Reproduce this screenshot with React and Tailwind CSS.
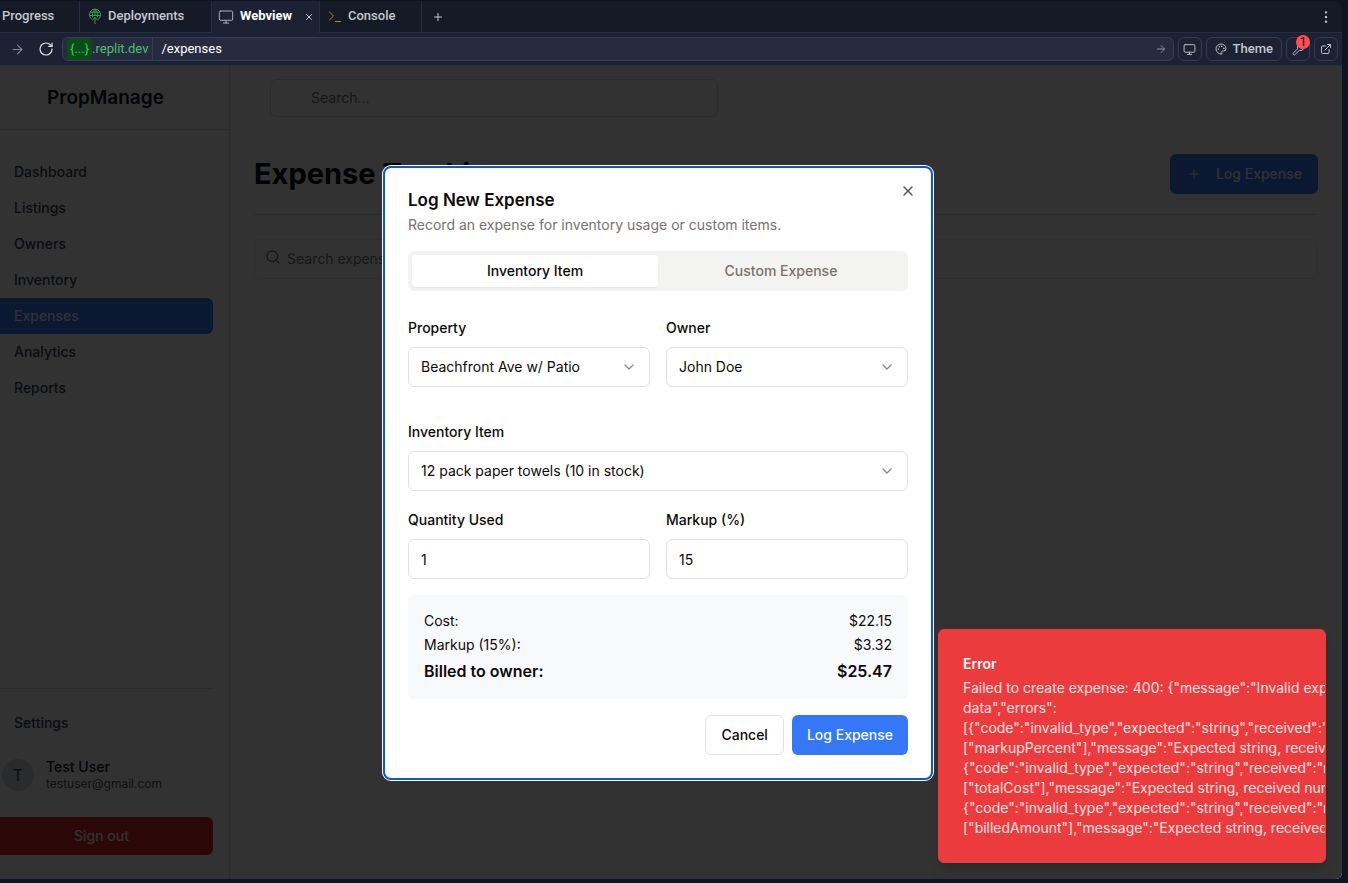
import React from "react";
import {
  ArrowRight,
  ChevronDown,
  EllipsisVertical,
  ExternalLink,
  Monitor,
  Palette,
  Plus,
  RotateCw,
  Search,
  Wrench,
  X,
} from "lucide-react";

function DeployIcon() {
  return (
    <svg width="14" height="16" viewBox="0 0 14 16" fill="none" stroke="#3f9a55" strokeWidth="1" strokeLinecap="round" strokeLinejoin="round" aria-hidden="true">
      <path d="M3.6 11.2A5.6 5.6 0 1 1 10.4 11.2" />
      <path d="M4.7 9.200C4 6.500 4.700 3 7 1.200C9.300 3 10 6.500 9.300 9.200" />
      <path d="M2.200 4.200H11.800M1.500 7.500H12.500M7 1.200V7.500" />
      <path d="M7 15.500V9.500M4.500 12L7 9.500L9.500 12" />
    </svg>
  );
}

function PromptIcon() {
  return (
    <svg width="14" height="14" viewBox="0 0 14 14" fill="none" stroke="#a98a3c" strokeWidth="1" strokeLinecap="round" strokeLinejoin="round" aria-hidden="true">
      <path d="M1.500 3L5.500 7L1.500 11M7.500 12.500H12.500" />
    </svg>
  );
}

function BrowserTabs() {
  return (
    <div className="flex h-8 shrink-0 overflow-hidden rounded-tr-lg bg-[#151b26] font-['Roboto',sans-serif] text-[13px] font-medium text-[#c3c8d0]">
      <button className="flex w-20 items-center border-r border-b border-[#262d42] pb-0.5 pl-0.5">Progress</button>
      <button className="flex w-33 items-center gap-1.5 border-r border-b border-[#262d42] pb-0.5 pl-2">
        <DeployIcon />
        Deployments
      </button>
      <div className="flex w-[107px] items-center justify-between bg-[#1c2133] pr-[5px] pl-1.5">
        <button className="flex items-center gap-1.5 pb-0.5 font-bold text-white">
          <Monitor size={16} strokeWidth={1.5} className="mt-0.5 text-[#a9afbb]" />
          Webview
        </button>
        <button aria-label="Close tab" className="text-[#c3c8d0]">
          <X size={10} strokeWidth={2.4} />
        </button>
      </div>
      <button className="flex w-[103px] items-center gap-1.5 border-x border-b border-[#262d42] pb-0.5 pl-2">
        <PromptIcon />
        Console
      </button>
      <div className="flex flex-1 items-center justify-between border-b border-[#262d42] pr-2 pl-2.5">
        <button aria-label="New tab">
          <Plus size={12} strokeWidth={2} />
        </button>
        <button aria-label="More options">
          <EllipsisVertical size={16} strokeWidth={1.6} />
        </button>
      </div>
    </div>
  );
}

function AddressBar() {
  const tool = "flex h-6 min-w-6 items-center justify-center rounded-md border border-[#333a52] text-[#b9bec8]";
  return (
    <div className="flex h-[33px] shrink-0 items-center gap-1 border-b border-[#262d42] bg-[#1c2133] px-1 font-['Roboto',sans-serif] text-[13px] text-[#c3c8d0]">
      <div className="flex w-[54px] items-center justify-between pr-1 pl-1.5">
        <button aria-label="Forward" className="text-[#7f8594]">
          <ArrowRight size={15} strokeWidth={1.8} />
        </button>
        <button aria-label="Reload" className="text-[#e1e4ea]">
          <RotateCw size={16} strokeWidth={1.8} />
        </button>
      </div>
      <div className="flex h-6 flex-1 items-center rounded-md border border-[#363d58] bg-[#272b40]">
        <span className="flex h-full items-center border-r border-[#363d58] pr-1 pl-1 text-[#4cc267]">
          <span className="rounded bg-[#0b4d17] px-[3px] py-px">{"{...}"}</span>.replit.dev
        </span>
        <input aria-label="Path" defaultValue="/expenses" className="min-w-0 flex-1 bg-transparent pl-2 text-white outline-none" />
        <button aria-label="Go" className="px-1.5 text-[#8a90a0]">
          <ArrowRight size={12} strokeWidth={2} />
        </button>
      </div>
      <button aria-label="Device size" className={tool}>
        <Monitor size={13} strokeWidth={1.8} />
      </button>
      <button className="flex h-6 items-center gap-1.5 rounded-md border border-[#333a52] px-2 font-medium">
        <Palette size={12} strokeWidth={1.8} />
        Theme
      </button>
      <button aria-label="Developer tools" className={tool + " relative"}>
        <Wrench size={13} strokeWidth={1.8} />
        <span className="absolute -top-[3px] -right-px flex size-3.5 items-center justify-center rounded-full bg-[#ff4d4f] text-[12px] text-[#3a0a0e]">1</span>
      </button>
      <button aria-label="Open in new tab" className={tool}>
        <ExternalLink size={12} strokeWidth={2} />
      </button>
    </div>
  );
}

const navItems = ["Dashboard", "Listings", "Owners", "Inventory", "Expenses", "Analytics", "Reports"];

function Sidebar() {
  return (
    <aside className="-ml-[26px] flex w-64 shrink-0 flex-col border-r border-gray-300 text-sm font-medium text-gray-700">
      <div className="flex h-16 items-center border-b border-gray-300 pl-[73px] text-[19px] font-semibold text-gray-900">PropManage</div>
      <nav className="flex flex-1 flex-col px-4 pt-6">
        {navItems.map((item) => (
          <a
            key={item}
            href="#"
            className={"flex h-9 items-center rounded-md pl-6 " + (item === "Expenses" ? "bg-[#3478f7] text-gray-100" : "")}
          >
            {item}
          </a>
        ))}
      </nav>
      <div className="px-4 pb-6">
        <div className="border-t border-gray-300 pt-4">
          <a href="#" className="flex h-9 items-center pl-6">Settings</a>
        </div>
        <div className="mt-[11px] mb-[19px] flex h-[46px] items-center gap-3 pl-3">
          <div className="flex size-8 items-center justify-center rounded-full bg-gray-300 text-base font-normal text-gray-700">T</div>
          <div>
            <p className="leading-[18px] text-gray-900">Test User</p>
            <p className="text-xs font-normal text-gray-600">testuser@gmail.com</p>
          </div>
        </div>
        <button className="h-[38px] w-full rounded-md bg-[#dc2626] text-gray-100">Sign out</button>
      </div>
    </aside>
  );
}

function ExpensePage() {
  return (
    <main className="min-w-0 flex-1">
      <div className="flex h-16 items-center border-b border-gray-100 px-10">
        <input aria-label="Search" placeholder="Search..." className="h-[38px] w-[448px] rounded-md border border-gray-300 pl-10 text-sm placeholder:text-gray-500" />
      </div>
      <div className="px-6 pt-6">
        <div className="flex items-center justify-between border-b border-gray-300 pb-5">
          <h1 className="text-[29px] leading-10 font-bold text-gray-950">Expense Tracking</h1>
          <button className="flex h-10 items-center rounded-md bg-[#3478f7] px-4 text-sm font-medium text-gray-100">
            <Plus size={16} strokeWidth={1.5} className="mr-3.5" />
            Log Expense
          </button>
        </div>
        <label className="mt-6 flex h-10 items-center rounded-md border border-gray-200 px-2.5">
          <Search size={16} className="mb-1 text-gray-500" />
          <input aria-label="Search expenses" placeholder="Search expenses..." className="min-w-0 flex-1 pl-1.5 text-sm placeholder:text-gray-500" />
        </label>
      </div>
    </main>
  );
}

const fieldBox = "col-start-1 row-start-1 h-10 w-full appearance-none rounded-md border border-[#e0e0e0] bg-white px-3 text-sm";

function SelectField({ id, label, options }) {
  return (
    <div>
      <label htmlFor={id} className="block text-sm leading-none font-medium">{label}</label>
      <div className="mt-3 grid items-center">
        <select id={id} className={fieldBox}>
          {options.map((o) => (
            <option key={o}>{o}</option>
          ))}
        </select>
        <ChevronDown size={16} strokeWidth={1.8} className="pointer-events-none col-start-1 row-start-1 mr-[13px] justify-self-end text-[#868686]" />
      </div>
    </div>
  );
}

function TextField({ id, label, value }) {
  return (
    <div>
      <label htmlFor={id} className="block text-sm leading-none font-medium">{label}</label>
      <input id={id} defaultValue={value} className={fieldBox + " mt-3 block"} />
    </div>
  );
}

function ExpenseDialog() {
  return (
    <div className="absolute inset-0 flex items-center justify-center bg-black/80 pt-px pr-[26px]">
      <div role="dialog" aria-labelledby="dialog-title" className="w-[550px] rounded-lg border-2 border-[#0b57d0] bg-white p-[23px] text-[#0c0a09] ring-1 ring-white">
        <div className="flex items-start justify-between">
          <h2 id="dialog-title" className="text-[17px] leading-[18px] font-semibold">Log New Expense</h2>
          <button aria-label="Close" className="-mt-2 -mr-2 text-[#555]">
            <X size={16} strokeWidth={2} />
          </button>
        </div>
        <p className="mt-1.5 text-sm text-[#78716c]">Record an expense for inventory usage or custom items.</p>

        <div role="tablist" className="mt-4 grid h-10 grid-cols-2 rounded-md bg-[#f3f3f1] p-1 text-sm font-medium">
          <button role="tab" aria-selected="true" className="rounded-sm bg-white shadow-xs">Inventory Item</button>
          <button role="tab" aria-selected="false" className="text-[#78716c]">Custom Expense</button>
        </div>

        <form onSubmit={(e) => e.preventDefault()} className="mt-[30px]">
          <div className="grid grid-cols-2 gap-4">
            <SelectField id="property" label="Property" options={["Beachfront Ave w/ Patio"]} />
            <SelectField id="owner" label="Owner" options={["John Doe"]} />
          </div>
          <div className="mt-[38px]">
            <SelectField id="item" label="Inventory Item" options={["12 pack paper towels (10 in stock)"]} />
          </div>
          <div className="mt-[22px] grid grid-cols-2 gap-4">
            <TextField id="quantity" label="Quantity Used" value="1" />
            <TextField id="markup" label="Markup (%)" value="15" />
          </div>

          <dl className="mt-4 flex flex-col gap-1 rounded-md bg-[#f8f9fb] p-4 text-sm">
            <div className="flex justify-between"><dt>Cost:</dt><dd>$22.15</dd></div>
            <div className="flex justify-between"><dt>Markup (15%):</dt><dd>$3.32</dd></div>
            <div className="flex justify-between text-base font-semibold"><dt>Billed to owner:</dt><dd>$25.47</dd></div>
          </dl>

          <div className="mt-4 flex justify-end gap-2 text-sm font-medium">
            <button type="button" className="h-10 rounded-md border border-[#e0e0e0] px-[15px]">Cancel</button>
            <button type="submit" className="h-10 rounded-md bg-[#3478f7] px-[15px] text-[#f8fafc]">Log Expense</button>
          </div>
        </form>
      </div>
    </div>
  );
}

const errorLines = [
  'Failed to create expense: 400: {"message":"Invalid expense',
  'data","errors":',
  '[{"code":"invalid_type","expected":"string","received":"number","path":',
  '["markupPercent"],"message":"Expected string, received number"},',
  '{"code":"invalid_type","expected":"string","received":"number","path":',
  '["totalCost"],"message":"Expected string, received number"},',
  '{"code":"invalid_type","expected":"string","received":"number","path":',
  '["billedAmount"],"message":"Expected string, received number"}]}',
];

function ErrorToast() {
  return (
    <div role="alert" className="absolute right-4 bottom-4 w-[388px] overflow-hidden rounded-md border border-[#ec3b3d] bg-[#ec3b3d] p-6 text-sm text-white shadow-lg">
      <p className="font-semibold">Error</p>
      <div className="mt-1 whitespace-nowrap text-white/85">
        {errorLines.map((line, i) => (
          <p key={i}>{line}</p>
        ))}
      </div>
    </div>
  );
}

export default function App() {
  return (
    <div className="flex min-h-screen flex-col bg-[#101322] pt-px pr-1.5 pb-1 font-['Inter',sans-serif]">
      <BrowserTabs />
      <AddressBar />
      <div className="relative flex flex-1 overflow-hidden rounded-br-md bg-[#fafafa]">
        <Sidebar />
        <ExpensePage />
        <ExpenseDialog />
        <ErrorToast />
      </div>
    </div>
  );
}
